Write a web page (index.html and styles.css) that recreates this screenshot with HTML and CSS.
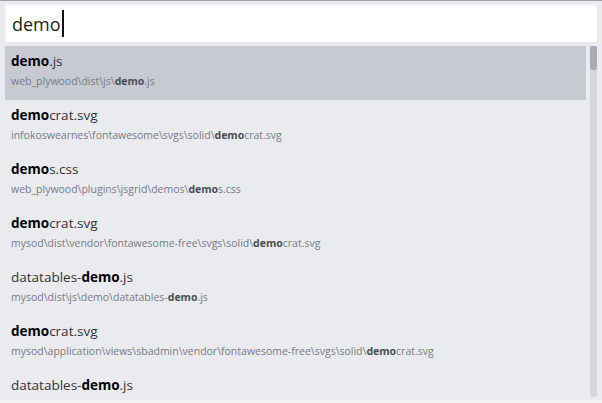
FILE: index.html
```html
<!DOCTYPE html>
<html>
<head>
<meta charset="utf-8">
<link rel="stylesheet" href="styles.css">
</head>
<body>
<div class="panel">
  <div class="search"><span class="query">demo</span><span class="caret"></span></div>
  <div class="results">
    <ul class="list">
      <li class="item active">
        <div class="title"><b>demo</b>.js</div>
        <div class="path">web_plywood\dist\js\<b>demo</b>.js</div>
      </li>
      <li class="item">
        <div class="title"><b>demo</b>crat.svg</div>
        <div class="path">infokoswearnes\fontawesome\svgs\solid\<b>demo</b>crat.svg</div>
      </li>
      <li class="item">
        <div class="title"><b>demo</b>s.css</div>
        <div class="path">web_plywood\plugins\jsgrid\demos\<b>demo</b>s.css</div>
      </li>
      <li class="item">
        <div class="title"><b>demo</b>crat.svg</div>
        <div class="path">mysod\dist\vendor\fontawesome-free\svgs\solid\<b>demo</b>crat.svg</div>
      </li>
      <li class="item">
        <div class="title">datatables-<b>demo</b>.js</div>
        <div class="path">mysod\dist\js\demo\datatables-<b>demo</b>.js</div>
      </li>
      <li class="item">
        <div class="title"><b>demo</b>crat.svg</div>
        <div class="path">mysod\application\views\sbadmin\vendor\fontawesome-free\svgs\solid\<b>demo</b>crat.svg</div>
      </li>
      <li class="item">
        <div class="title">datatables-<b>demo</b>.js</div>
        <div class="path">mysod\application\views\sbadmin\js\demo\datatables-<b>demo</b>.js</div>
      </li>
    </ul>
    <div class="scrollbar"><div class="thumb"></div></div>
  </div>
</div>
</body>
</html>
```
FILE: styles.css
```css
html, body {
  margin: 0;
  padding: 0;
  background: #f4f4f5;
}
body {
  font-family: "Open Sans", "Noto Sans", sans-serif;
  width: 602px;
  height: 403px;
  overflow: hidden;
}
.panel {
  height: 399px;
  border-top: 1px solid #a0a0a2;
  background: #eaebee;
  padding: 4px 5px 0 5px;
  box-sizing: border-box;
  height: 400px;
  display: flex;
  flex-direction: column;
  gap: 4px;
}
.search {
  height: 37px;
  background: #ffffff;
  border-radius: 2px;
  display: flex;
  align-items: center;
  padding-left: 7px;
  flex-shrink: 0;
}
.query {
  font-size: 18px;
  color: #1e1e1e;
  line-height: 24px;
}
.caret {
  width: 2px;
  height: 27px;
  background: #111;
  margin-left: 1px;
}
.results {
  flex: 1;
  display: flex;
  gap: 4px;
  min-height: 0;
  overflow: hidden;
}
.list {
  flex: 1;
  margin: 0;
  padding: 0;
  list-style: none;
  overflow: hidden;
}
.item {
  height: 54px;
  box-sizing: border-box;
  padding: 6px 6px 0 6px;
  white-space: nowrap;
  overflow: hidden;
}
.item.active {
  background: #c8cad2;
}
.title {
  font-size: 13.5px;
  line-height: 18px;
  color: #333338;
}
.title b {
  color: #000;
  font-weight: 700;
}
.path {
  font-size: 10.5px;
  line-height: 14px;
  margin-top: 4px;
  color: #767a86;
}
.path b {
  color: #4a4c55;
  font-weight: 700;
}
.scrollbar {
  width: 7px;
  height: 351px;
  background: #d6d7db;
  border-radius: 0 0 2px 2px;
  flex-shrink: 0;
}
.thumb {
  height: 24px;
  background: #a9abb3;
  border-radius: 2px;
}
```
